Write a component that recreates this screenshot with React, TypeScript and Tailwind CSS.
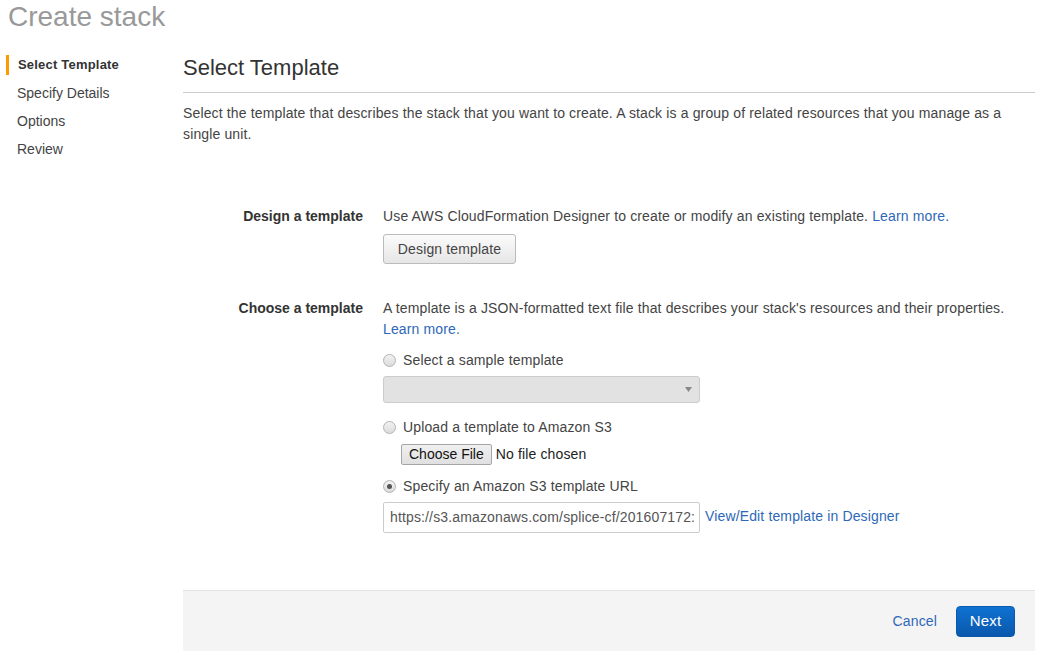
import React from "react";

function Radio({ checked }: { checked?: boolean }) {
  return (
    <span className="flex h-[13px] w-[13px] shrink-0 items-center justify-center rounded-full border border-[#b3b3b3] bg-gradient-to-b from-[#f2f2f2] to-[#dcdcdc]">
      {checked && <span className="h-[5px] w-[5px] rounded-full bg-[#555]" />}
    </span>
  );
}

export default function App() {
  return (
    <div
      className="min-h-[662px] w-[1044px] bg-white text-[14px] text-[#444]"
      style={{ fontFamily: '"Liberation Sans", Arial, sans-serif' }}
    >
      <h1 className="pl-[8px] text-[28px] leading-[34px] font-normal text-[#999]">Create stack</h1>
      <div className="mt-[21px] flex">
        <nav className="flex w-[183px] shrink-0 flex-col gap-[8px] pl-[6px]">
          <div className="border-l-[3px] border-[#f90] pl-[9px] text-[13px] leading-[20px] font-bold tracking-[0.2px] text-[#333]">
            Select Template
          </div>
          <div className="pl-[11px] text-[14px] leading-[20px] text-[#444]">Specify Details</div>
          <div className="pl-[11px] text-[14px] leading-[20px] text-[#444]">Options</div>
          <div className="pl-[11px] text-[14px] leading-[20px] text-[#444]">Review</div>
        </nav>
        <main className="w-[852px] tracking-[0.14px]">
          <h2 className="-mt-[1px] border-b border-[#ccc] pb-[10px] text-[22px] leading-[28px] font-normal tracking-normal text-[#333]">
            Select Template
          </h2>
          <p className="mt-[10px] leading-[21px]">
            Select the template that describes the stack that you want to create. A stack is a group of related
            resources that you manage as a
            <br />
            single unit.
          </p>

          <div className="mt-[61px] flex">
            <div className="w-[180px] shrink-0 text-right leading-[20px] font-bold tracking-normal text-[#333]">
              Design a template
            </div>
            <div className="ml-[20px] flex flex-col items-start">
              <div className="leading-[20px]">
                Use AWS CloudFormation Designer to create or modify an existing template.{" "}
                <a className="text-[#2e68b8]">Learn more.</a>
              </div>
              <button className="mt-[8px] h-[30px] w-[133px] rounded-[3px] border border-[#bbb] bg-gradient-to-b from-[#fbfbfb] to-[#e6e6e6] text-[14px] text-[#444]">
                Design template
              </button>
            </div>
          </div>

          <div className="mt-[34px] flex">
            <div className="w-[180px] shrink-0 text-right leading-[21px] font-bold tracking-normal text-[#333]">
              Choose a template
            </div>
            <div className="ml-[20px] flex flex-col items-start">
              <div className="leading-[21px]">
                A template is a JSON-formatted text file that describes your stack's resources and their properties.
                <br />
                <a className="text-[#2e68b8]">Learn more.</a>
              </div>
              <label className="mt-[10px] flex items-center gap-[7px] leading-[20px]">
                <Radio />
                Select a sample template
              </label>
              <div className="mt-[6px] flex h-[27px] w-[317px] items-center justify-end rounded-[3px] border border-[#ccc] bg-[#e2e2e2] pr-[7px]">
                <svg width="7" height="5" viewBox="0 0 7 5">
                  <path d="M0 0h7L3.5 5z" fill="#888" />
                </svg>
              </div>
              <label className="mt-[14px] flex items-center gap-[7px] leading-[20px]">
                <Radio />
                Upload a template to Amazon S3
              </label>
              <div className="mt-[7px] ml-[18px] flex items-center gap-[4px]">
                <button className="h-[21px] rounded-[2px] border border-[#a6a6a6] bg-gradient-to-b from-[#f0f0f0] to-[#e0e0e0] px-[7px] text-[14px] leading-[19px] tracking-normal text-[#111]">
                  Choose File
                </button>
                <span className="text-[14px] text-[#222]">No file chosen</span>
              </div>
              <label className="mt-[11px] flex items-center gap-[7px] leading-[20px]">
                <Radio checked />
                Specify an Amazon S3 template URL
              </label>
              <div className="mt-[6px] flex items-center gap-[5px]">
                <div className="flex h-[31px] w-[317px] items-center overflow-hidden rounded-[2px] border border-[#ccc] bg-white pl-[6px] whitespace-nowrap text-[#555]">
                  https://s3.amazonaws.com/splice-cf/201607172:
                </div>
                <a className="-mt-[3px] leading-[20px] text-[#2e68b8]">View/Edit template in Designer</a>
              </div>
            </div>
          </div>

          <div className="mt-[57px] flex h-[61px] items-center justify-end gap-[19px] border-t border-[#e3e3e3] bg-[#f4f4f4] pr-[20px]">
            <a className="text-[#2e68b8]">Cancel</a>
            <button className="mt-[1px] h-[31px] w-[59px] rounded-[4px] border border-[#0b59ab] bg-gradient-to-b from-[#0f72d2] to-[#0a58ac] text-[15px] font-normal text-white">
              Next
            </button>
          </div>
        </main>
      </div>
    </div>
  );
}
